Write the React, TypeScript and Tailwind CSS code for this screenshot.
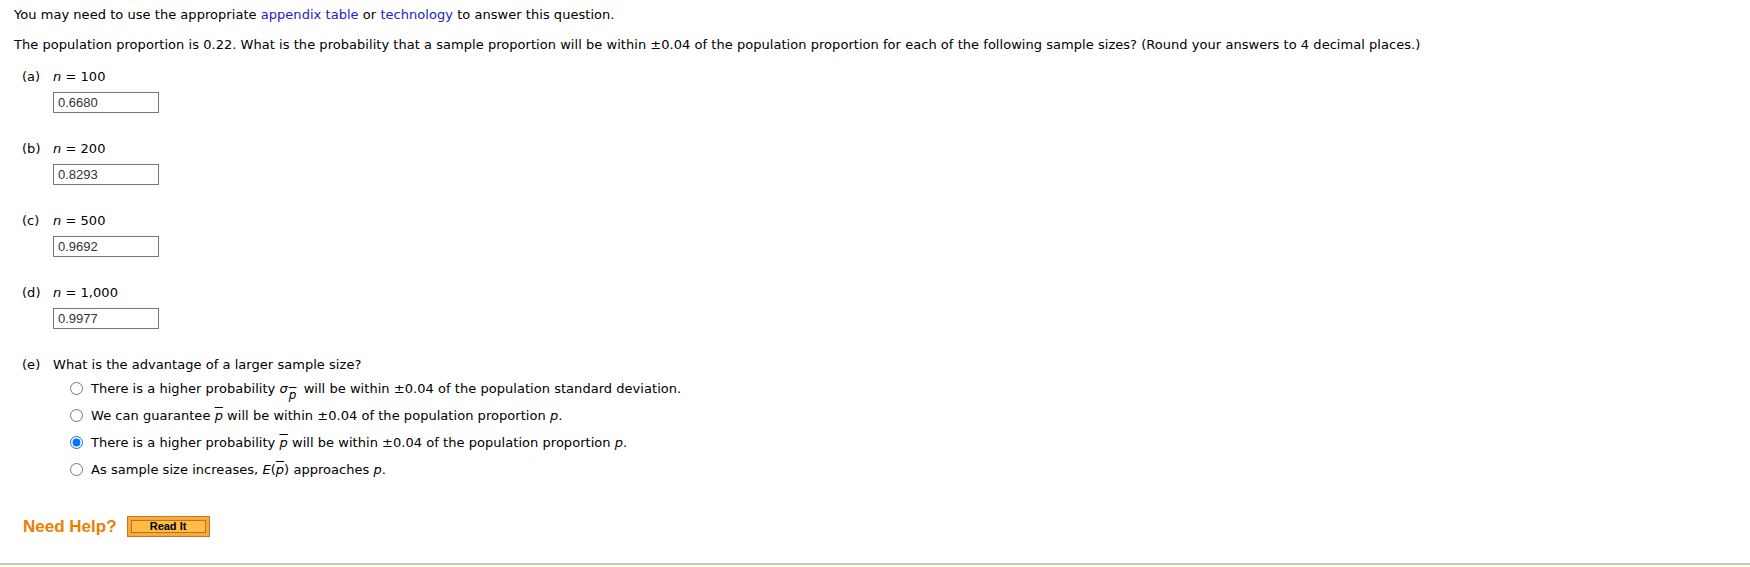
const sans = "font-['DejaVu_Sans',Verdana,sans-serif]";

interface PartProps {
  label: string;
  n: string;
  value: string;
}

function Part({ label, n, value }: PartProps) {
  return (
    <div className="mb-[27px]">
      <div className="flex h-[17px] items-center">
        <span className="w-[31px]">{label}</span>
        <span>
          <i>n</i> = {n}
        </span>
      </div>
      <input
        readOnly
        defaultValue={value}
        className="ml-[31px] mt-[7px] block h-[21px] w-[106px] border border-[#767676] bg-white px-[4px] font-['Liberation_Sans',Arial,sans-serif] text-[13px] tracking-normal text-[#333] outline-none"
      />
    </div>
  );
}

function Option({ checked, children }: { checked?: boolean; children: React.ReactNode }) {
  return (
    <label className="flex h-[27px] items-center">
      <input
        type="radio"
        name="e"
        defaultChecked={checked}
        className="m-0 h-[13px] w-[13px] accent-[#0075ff]"
      />
      <span className="ml-[8px] whitespace-nowrap">{children}</span>
    </label>
  );
}

const pbar = <i className="overline">p</i>;

export default function App() {
  return (
    <div className={`${sans} flex h-[567px] flex-col bg-white text-[13px] tracking-[0.04px] text-black`}>
      <div className="pl-[14px] pt-[6px]">
        <p className="leading-[17px]">
          You may need to use the appropriate <a className="text-[#2222cc]">appendix table</a> or{" "}
          <a className="text-[#2222cc]">technology</a> to answer this question.
        </p>
        <p className="mt-[13px] leading-[17px]">
          The population proportion is 0.22. What is the probability that a sample proportion will be within ±0.04 of
          the population proportion for each of the following sample sizes? (Round your answers to 4 decimal places.)
        </p>

        <div className="ml-[8px] mt-[15px] leading-[17px]">
          <Part label="(a)" n="100" value="0.6680" />
          <Part label="(b)" n="200" value="0.8293" />
          <Part label="(c)" n="500" value="0.9692" />
          <Part label="(d)" n="1,000" value="0.9977" />

          <div className="flex h-[17px] items-center">
            <span className="w-[31px]">(e)</span>
            <span>What is the advantage of a larger sample size?</span>
          </div>
          <div className="ml-[48px] mt-[2px]">
            <Option>
              There is a higher probability <i>σ</i>
              <sub className="relative top-[6px] ml-[1px] mr-[3px] text-[12px]">{pbar}</sub> will be within ±0.04 of
              the population standard deviation.
            </Option>
            <Option>
              We can guarantee {pbar} will be within ±0.04 of the population proportion <i>p</i>.
            </Option>
            <Option checked>
              There is a higher probability {pbar} will be within ±0.04 of the population proportion <i>p</i>.
            </Option>
            <Option>
              As sample size increases, <i>E</i>({pbar}) approaches <i>p</i>.
            </Option>
          </div>
        </div>

        <div className="ml-[9px] mt-[31px] flex items-center gap-[10px] font-['Liberation_Sans',Arial,sans-serif] tracking-normal">
          <span className="text-[17px] font-bold text-[#ef7d00]">Need Help?</span>
          <button className="border border-[#c0782a] bg-[#f9a93b] p-[3px]">
            <span className="flex h-[13px] w-[75px] items-center justify-center border border-[#b8741e] bg-[#ffbd45] text-[11px] font-bold leading-none text-black">
              Read It
            </span>
          </button>
        </div>
      </div>

      <div className="mt-auto h-[4px] border-t-2 border-[#c8c8c8] bg-[#ffffdd]" />
    </div>
  );
}
